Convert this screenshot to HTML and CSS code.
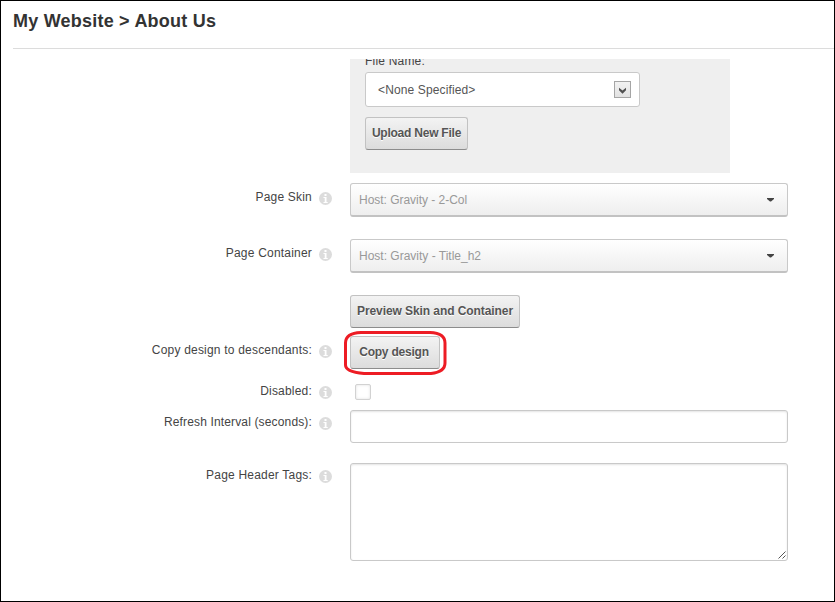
FILE: index.html
```html
<!DOCTYPE html>
<html lang="en">
<head>
<meta charset="utf-8">
<title>My Website &gt; About Us</title>
<link rel="stylesheet" href="styles.css">
</head>
<body>
<svg class="defs" width="0" height="0" aria-hidden="true">
  <symbol id="info" viewBox="0 0 13 13">
    <circle cx="6.5" cy="6.5" r="6.5" fill="#dcdcdc"/>
    <path d="M5.500 2h2v2h-2zM4.500 5h3v5h1.200v1H4.500v-1h1.200V6H4.500z" fill="#fff"/>
  </symbol>
</svg>
<main class="page">
  <header class="header"><h1 class="title">My Website &gt; About Us</h1></header>
  <section class="file-panel">
    <div class="file-label">File Name:</div>
    <div class="file-select"><span class="none">&lt;None Specified&gt;</span>
      <span class="select-button"><svg width="9" height="7" viewBox="0 0 9 7"><path d="M1 .8v2.400L4.500 6.700 8 3.200V.8L4.500 3.500z" fill="#505050"/></svg></span>
    </div>
    <button class="button upload">Upload New File</button>
  </section>
  <div class="row row-skin">
    <label class="label">Page Skin</label><svg class="info"><use href="#info"/></svg>
    <div class="combo"><span class="skin-value">Host: Gravity - 2-Col</span><svg class="caret" viewBox="0 0 7 4"><path d="M0 0h7v1L4 3.500H3L0 1z" fill="#444"/></svg></div>
  </div>
  <div class="row row-container">
    <label class="label">Page Container</label><svg class="info"><use href="#info"/></svg>
    <div class="combo"><span>Host: Gravity - Title_h2</span><svg class="caret" viewBox="0 0 7 4"><path d="M0 0h7v1L4 3.500H3L0 1z" fill="#444"/></svg></div>
  </div>
  <div class="row row-preview"><button class="button preview">Preview Skin and Container</button></div>
  <div class="row row-copy">
    <label class="label">Copy design to descendants:</label><svg class="info"><use href="#info"/></svg>
    <div class="copy-wrap"><button class="button copy">Copy design</button>
      <svg class="highlight" width="104" height="46" viewBox="0 0 104 46"><path d="M18 2.500H87Q102 3 102 13V33Q102 42 88 43.500H21Q2.500 42 2.500 35V13Q2.500 3 18 2.500Z" fill="none" stroke="#ed1c24" stroke-width="3"/></svg>
    </div>
  </div>
  <div class="row row-disabled">
    <label class="label">Disabled:</label><svg class="info"><use href="#info"/></svg>
    <span class="checkbox"></span>
  </div>
  <div class="row row-refresh">
    <label class="label refresh">Refresh Interval (seconds):</label><svg class="info"><use href="#info"/></svg>
    <input class="field" type="text">
  </div>
  <div class="row row-tags">
    <label class="label">Page Header Tags:</label><svg class="info"><use href="#info"/></svg>
    <div class="field area"><svg class="grip" width="8" height="8" viewBox="0 0 8 8"><path d="M.5 7.500l7-7M4.500 7.500l3-3" stroke="#555" fill="none"/></svg></div>
  </div>
</main>
</body>
</html>
```

FILE: styles.css
```css
* { box-sizing: border-box; }

body {
  margin: 0;
  background: #fff;
  color: #444;
  font: 12px/16px "Liberation Sans", Arial, sans-serif;
}

.defs { display: block; }

.page {
  height: 602px;
  border: 1px solid #000;
  overflow: hidden;
}

.header {
  height: 48px;
  margin-left: 12px;
  padding-top: 9px;
  border-bottom: 1px solid #dcdcdc;
}

.title {
  margin: 0;
  color: #333;
  font-size: 18px;
  line-height: 22px;
  letter-spacing: .22px;
}

.file-panel {
  width: 380px;
  height: 114px;
  margin: 10px 0 0 349px;
  padding-left: 15px;
  overflow: hidden;
  background: #efefef;
}

.file-label {
  height: 13px;
  line-height: 5px;
  letter-spacing: .2px;
}

.file-select {
  display: flex;
  align-items: center;
  justify-content: space-between;
  width: 275px;
  height: 35px;
  padding: 0 8px 0 12px;
  background: #fff;
  border: 1px solid #c9c9c9;
  border-radius: 3px;
}

.none { letter-spacing: .13px; color: #555; }

.select-button {
  display: flex;
  align-items: center;
  justify-content: center;
  width: 17px;
  height: 17px;
  padding-top: 2px;
  border: 1px solid #a5a5a5;
  background: linear-gradient(#f2f2f2, #e2e2e2);
}

.button {
  display: block;
  height: 33px;
  padding: 0 0 2px;
  border: 1px solid #c2c2c2;
  border-bottom-color: #8c8c8c;
  border-radius: 3px;
  background: linear-gradient(#f3f3f3, #dcdcdc);
  color: #555;
  font: bold 12px/16px "Liberation Sans", Arial, sans-serif;
  text-shadow: 0 1px 0 #fff;
  white-space: nowrap;
}

.upload { width: 103px; margin-top: 10px; letter-spacing: -.23px; }
.preview { width: 170px; margin-left: 349px; letter-spacing: -.08px; }
.copy { width: 90px; padding-right: 2px; letter-spacing: -.22px; }

.row { display: flex; align-items: flex-start; }

.row-skin { height: 56px; margin-top: 10px; }
.row-container { height: 56px; }
.row-preview { height: 41px; }
.row-copy { height: 48px; }
.row-disabled { height: 26px; }
.row-refresh { height: 53px; }

.label {
  width: 311px;
  padding-top: 6px;
  text-align: right;
  letter-spacing: .2px;
}

.refresh { letter-spacing: .15px; }

.info {
  flex: none;
  width: 13px;
  height: 13px;
  margin: 9px 18px 0 7px;
}

.row-disabled .label { padding-top: 0; margin-top: -1px; }
.row-disabled .info { margin-top: 2px; }
.row-refresh .label, .row-tags .label { padding-top: 4px; }
.row-refresh .info, .row-tags .info { margin-top: 7px; }

.combo {
  display: flex;
  align-items: center;
  justify-content: space-between;
  width: 438px;
  height: 34px;
  padding: 0 13px 0 8px;
  border: 1px solid #c9c9c9;
  border-bottom: 2px solid #c2c2c2;
  border-radius: 3px;
  background: linear-gradient(#fff, #eee);
  color: #999;
}

.skin-value { letter-spacing: -.03px; }

.caret { width: 7px; height: 4px; }

.copy-wrap { position: relative; }
.highlight { position: absolute; left: -7px; top: -6px; }

.checkbox {
  width: 16px;
  height: 16px;
  margin-left: 5px;
  border: 1px solid #d2d2d2;
  border-radius: 2px;
  box-shadow: inset 0 0 3px #e0e0e0;
}

.field {
  width: 438px;
  height: 33px;
  padding: 0;
  border: 1px solid #c9c9c9;
  border-radius: 3px;
  background: #fff;
  box-shadow: inset 0 1px 2px #e4e4e4;
}

.area {
  display: flex;
  align-items: flex-end;
  justify-content: flex-end;
  height: 98px;
  padding: 1px;
}
```
